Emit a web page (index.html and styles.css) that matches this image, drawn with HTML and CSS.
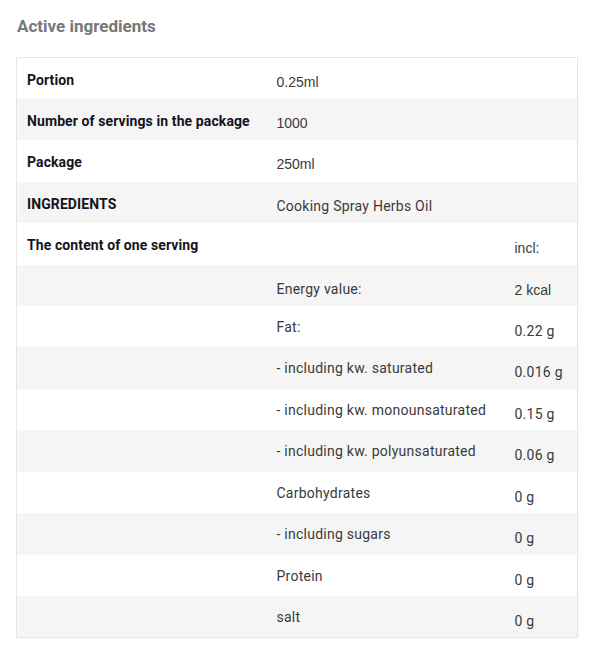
FILE: index.html
```html
<!DOCTYPE html>
<html>
<head>
<meta charset="utf-8">
<link rel="stylesheet" href="styles.css">
</head>
<body>
<div class="wrap">
  <h2 class="title">Active ingredients</h2>
  <table class="tbl">
    <tr><th>Portion</th><td class="v arial">0.25ml</td><td class="n"></td></tr>
    <tr class="alt"><th>Number of servings in the package</th><td class="v arial">1000</td><td class="n"></td></tr>
    <tr><th>Package</th><td class="v arial">250ml</td><td class="n"></td></tr>
    <tr class="alt"><th>INGREDIENTS</th><td class="v">Cooking Spray Herbs Oil</td><td class="n"></td></tr>
    <tr><th>The content of one serving</th><td class="v"></td><td class="n arial">incl:</td></tr>
    <tr class="alt"><th></th><td class="v">Energy value:</td><td class="n arial">2 kcal</td></tr>
    <tr class="sub"><th></th><td class="v">Fat:</td><td class="n">0.22 g</td></tr>
    <tr class="alt sub"><th></th><td class="v">- including kw. saturated</td><td class="n">0.016 g</td></tr>
    <tr class="sub"><th></th><td class="v">- including kw. monounsaturated</td><td class="n">0.15 g</td></tr>
    <tr class="alt sub"><th></th><td class="v">- including kw. polyunsaturated</td><td class="n">0.06 g</td></tr>
    <tr class="sub"><th></th><td class="v">Carbohydrates</td><td class="n">0 g</td></tr>
    <tr class="alt sub"><th></th><td class="v">- including sugars</td><td class="n">0 g</td></tr>
    <tr class="sub"><th></th><td class="v">Protein</td><td class="n">0 g</td></tr>
    <tr class="alt sub"><th></th><td class="v">salt</td><td class="n">0 g</td></tr>
  </table>
</div>
</body>
</html>
```
FILE: styles.css
```css
html, body {
  margin: 0;
  padding: 0;
  background: #fff;
}
.wrap {
  padding: 15px 17px 0 16px;
  font-family: Roboto, "Liberation Sans", sans-serif;
}
.title {
  margin: 0 0 20px 1px;
  font-size: 17px;
  font-weight: 700;
  line-height: 22px;
  color: #777;
}
.tbl {
  width: 562px;
  border-collapse: collapse;
  border: 1px solid #e6e6e6;
  table-layout: fixed;
}
.tbl tr {
  height: 41.43px;
}
.tbl tr.alt {
  background: #f5f5f5;
}
.tbl th,
.tbl td {
  box-sizing: border-box;
  vertical-align: top;
  font-size: 14px;
  line-height: 16px;
  padding: 0 0 0 10px;
}
.tbl th {
  width: 250px;
  text-align: left;
  padding-top: 14px;
  font-weight: 700;
  color: #14141e;
  letter-spacing: 0.1px;
}
.tbl td {
  color: #3a3a3a;
  padding-top: 16px;
  letter-spacing: 0.25px;
}
.tbl td.v {
  width: 238px;
}
.tbl tr.sub td.v {
  padding-top: 13px;
}
.tbl td.n {
  padding-top: 17px;
}
.tbl .arial {
  font-family: "Liberation Sans", Arial, sans-serif;
  letter-spacing: 0;
}
```
